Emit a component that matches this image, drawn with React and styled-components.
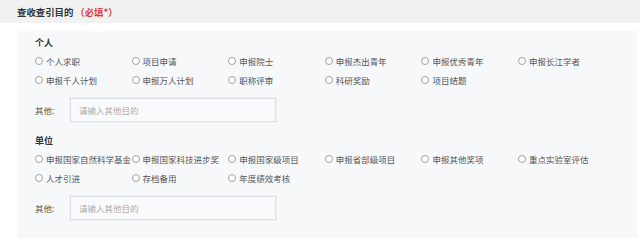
import React from "react";
import styled, { createGlobalStyle } from "styled-components";

const personalOptions = [
  "个人求职",
  "项目申请",
  "申报院士",
  "申报杰出青年",
  "申报优秀青年",
  "申报长江学者",
  "申报千人计划",
  "申报万人计划",
  "职称评审",
  "科研奖励",
  "项目结题",
];

const unitOptions = [
  "申报国家自然科学基金",
  "申报国家科技进步奖",
  "申报国家级项目",
  "申报省部级项目",
  "申报其他奖项",
  "重点实验室评估",
  "人才引进",
  "存档备用",
  "年度绩效考核",
];

function OptionGroup({ title, options, name }) {
  return (
    <Group>
      <GroupTitle>{title}</GroupTitle>
      <OptionGrid>
        {options.map((opt) => (
          <Option key={opt}>
            <RadioInput type="radio" name={name} />
            <RadioDot />
            {opt}
          </Option>
        ))}
      </OptionGrid>
      <OtherRow>
        <OtherLabel>其他:</OtherLabel>
        <OtherInput placeholder="请输入其他目的" />
      </OtherRow>
    </Group>
  );
}

export default function App() {
  return (
    <>
      <GlobalStyle />
      <Header>
        <Title>
          查收查引目的<Required>（必填*）</Required>
        </Title>
      </Header>
      <Panel>
        <OptionGroup title="个人" name="personal" options={personalOptions} />
        <OptionGroup title="单位" name="unit" options={unitOptions} />
      </Panel>
    </>
  );
}

const GlobalStyle = createGlobalStyle`
  body {
    margin: 0;
    background: #fff;
    font-family: "Noto Sans CJK SC", "Liberation Sans", sans-serif;
  }
`;

const Header = styled.div`
  height: 23px;
  background: #f1f1f1;
  display: flex;
  align-items: center;
  padding-left: 17px;
`;

const Title = styled.div`
  font-size: 9.4px;
  font-weight: bold;
  color: #333;
`;

const Required = styled.span`
  color: #e4393c;
  margin-left: 2px;
`;

const Panel = styled.div`
  margin: 8px 3px 0 17px;
  height: 207px;
  box-sizing: border-box;
  background: #f7f8fa;
  padding: 6px 0 0 18px;
`;

const Group = styled.div`
  & + & {
    margin-top: 13px;
  }
`;

const GroupTitle = styled.div`
  height: 12px;
  line-height: 12px;
  font-size: 9px;
  font-weight: bold;
  color: #333;
`;

const OptionGrid = styled.div`
  margin-top: 2px;
  display: grid;
  grid-template-columns: repeat(6, 96.6px);
  grid-auto-rows: 19px;
`;

const Option = styled.label`
  display: flex;
  align-items: center;
  font-size: 8.5px;
  color: #555;
  white-space: nowrap;
  cursor: pointer;
`;

const RadioInput = styled.input`
  display: none;
`;

const RadioDot = styled.span`
  width: 8px;
  height: 8px;
  border: 1px solid #a0a0a0;
  border-radius: 50%;
  background: #fff;
  margin: 1px 3px 0 0;
  box-sizing: border-box;
  flex-shrink: 0;
`;

const OtherRow = styled.div`
  margin-top: 9px;
  display: flex;
  align-items: center;
`;

const OtherLabel = styled.div`
  width: 35px;
  font-size: 8.5px;
  color: #555;
`;

const OtherInput = styled.input`
  width: 206px;
  height: 24px;
  box-sizing: border-box;
  border: 1px solid #dcdfe3;
  box-shadow: 0 0 0 1px #eef0f2;
  background: #f9fafb;
  padding: 0 8px;
  font-family: inherit;
  font-size: 8.5px;
  color: #555;
  outline: none;
  &::placeholder {
    color: #aaa;
  }
`;
